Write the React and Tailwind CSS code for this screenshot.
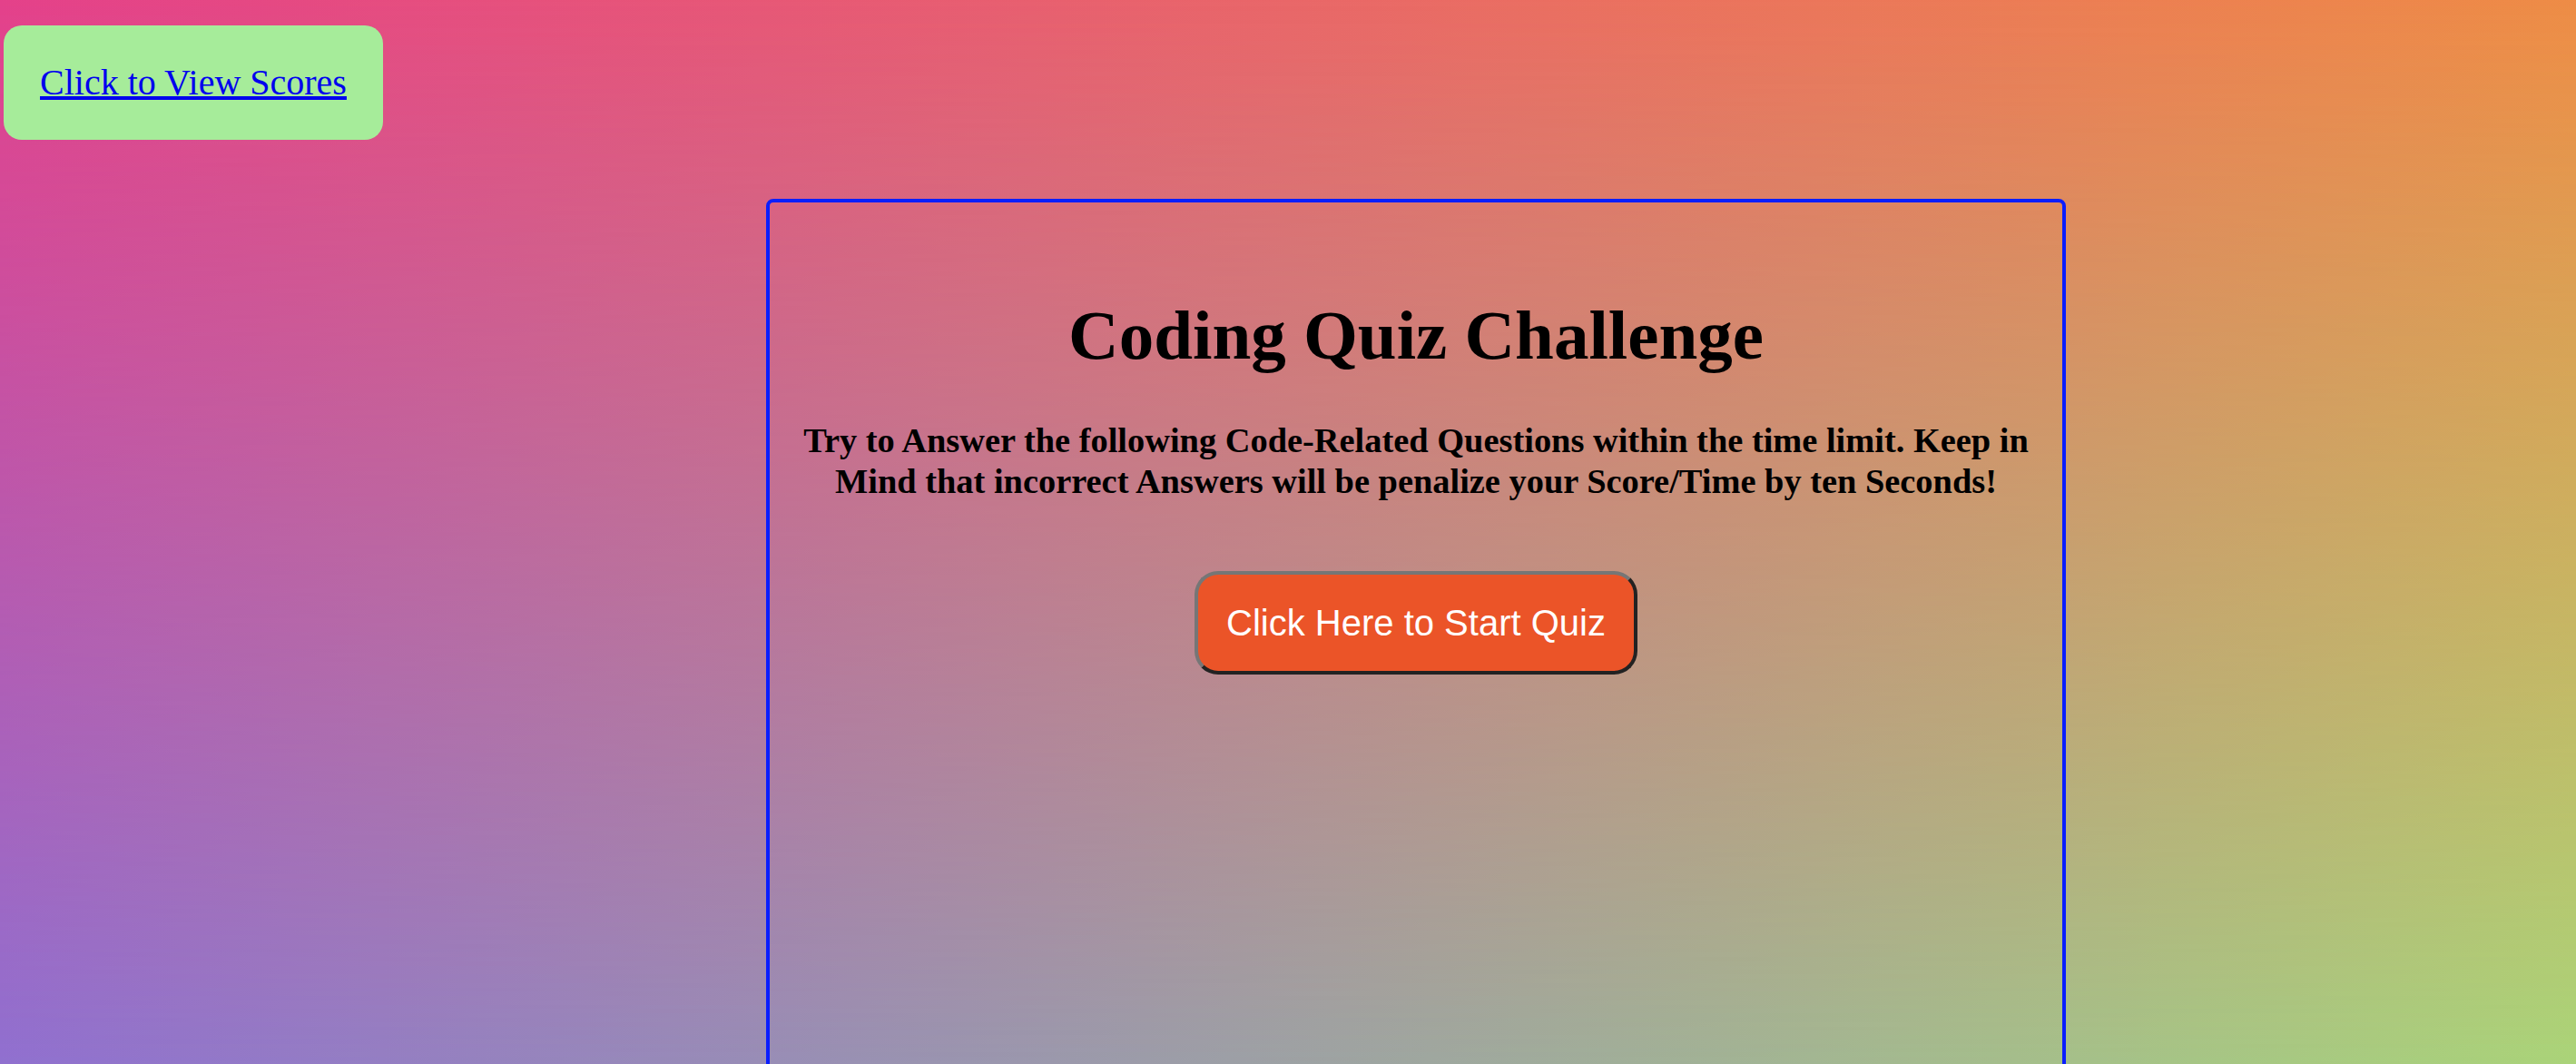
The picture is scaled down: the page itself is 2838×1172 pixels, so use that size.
export default function App() {
  return (
    <div className="grid h-screen w-full overflow-hidden bg-[linear-gradient(to_right,#8d72d3,#a8d77b)]">
      {/* top colour row, faded downward so the corners blend */}
      <div className="col-start-1 row-start-1 bg-[linear-gradient(to_right,#e4418a,#ee8c46)] [mask-image:linear-gradient(to_bottom,black,transparent)] [-webkit-mask-image:linear-gradient(to_bottom,black,transparent)]" />

      <div className="relative z-[1] col-start-1 row-start-1 flex flex-col items-start font-['Liberation_Serif',serif]">
        <a
          href="#scores"
          className="ml-[4px] mt-[28px] inline-block rounded-[20px] bg-[#a6ec9a] px-[40px] py-[40px] text-[40px] leading-[46px] text-[#0000ee] underline"
        >
          Click to View Scores
        </a>

        <div className="ml-[844px] mt-[65px] min-h-[1000px] w-[1432px] rounded-[8px] border-4 border-[#0a1eff] px-[12px] pt-[102px] text-center text-black">
          <h1 className="text-[77px] font-bold leading-[88px]">Coding Quiz Challenge</h1>
          <p className="mt-[50px] text-[38.4px] font-bold leading-[45px]">
            Try to Answer the following Code-Related Questions within the time limit. Keep in Mind that incorrect Answers will be penalize your Score/Time by ten Seconds!
          </p>
          <div className="mt-[76px] flex justify-center">
            <button
              type="button"
              className="rounded-[26px] border-4 border-t-[#767676] border-l-[#767676] border-b-[#222222] border-r-[#222222] bg-[#eb5428] px-[31px] py-[30px] font-['Liberation_Sans',Arial,sans-serif] text-[40px] leading-[46px] text-white"
            >
              Click Here to Start Quiz
            </button>
          </div>
        </div>
      </div>
    </div>
  );
}
